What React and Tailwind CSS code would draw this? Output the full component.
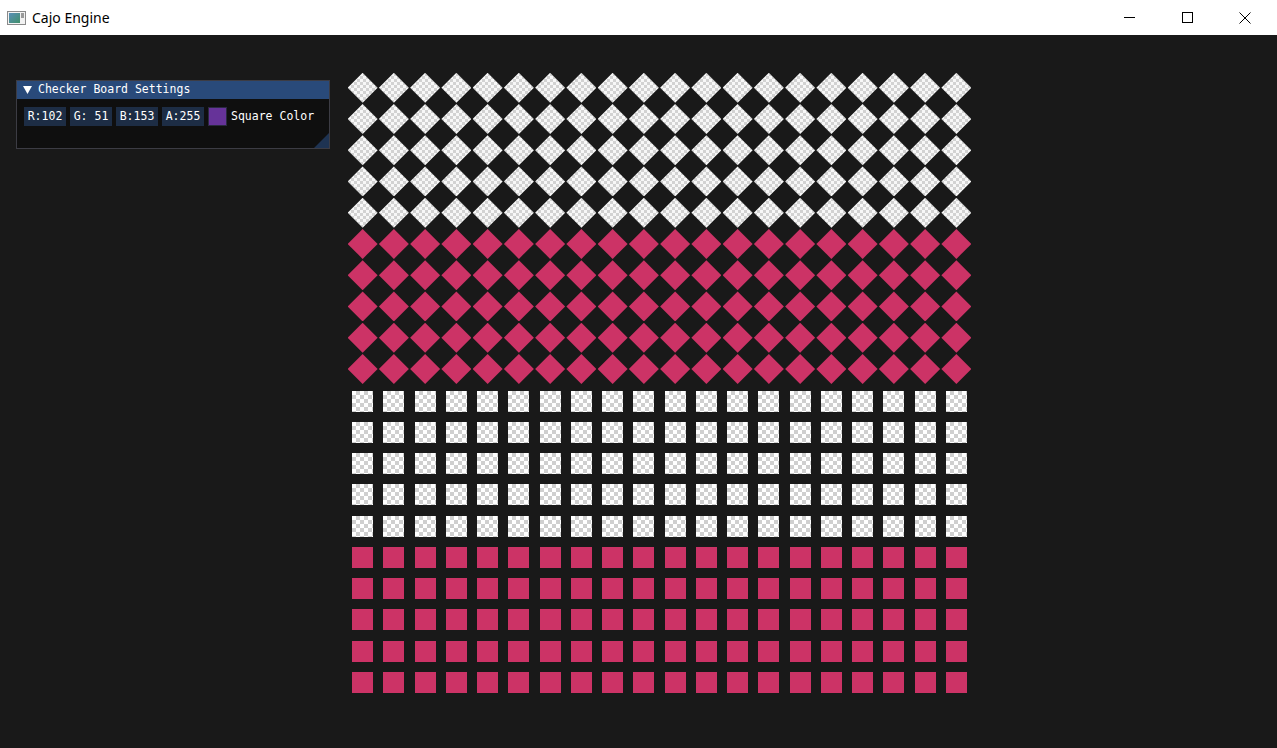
import React from "react";

const ROWS = 20;
const COLS = 20;

// checker texture used on the white shapes
const checker =
  "bg-[image:repeating-conic-gradient(#cfcfcf_0_25%,#ffffff_0_50%)] bg-[length:8px_8px]";
const checkerFine =
  "bg-[image:repeating-conic-gradient(#d2d2d2_0_25%,#f7f7f7_0_50%)] bg-[length:6px_6px]";

function Cell({ row }) {
  const diamond = row < 10;
  const white = row % 10 < 5;

  if (diamond) {
    return (
      <div className="flex items-center justify-center h-[31.25px]">
        <div
          className={`w-[30px] h-[30px] [clip-path:polygon(50%_0,100%_50%,50%_100%,0_50%)] ${
            white ? checkerFine : "bg-[#cc3366]"
          }`}
        />
      </div>
    );
  }
  return (
    <div className="flex items-center justify-center h-[31.25px] pt-[2px]">
      <div className={`w-[21px] h-[21px] ${white ? checker : "bg-[#cc3366]"}`} />
    </div>
  );
}

function TitleBar() {
  return (
    <div className="h-[35px] bg-white flex items-center shrink-0">
      {/* app icon */}
      <svg width="19" height="14" viewBox="0 0 19 14" className="ml-[7px]">
        <defs>
          <linearGradient id="ic" x1="0" y1="0" x2="1" y2="1">
            <stop offset="0" stopColor="#5a8fb8" />
            <stop offset="1" stopColor="#3f8f6a" />
          </linearGradient>
        </defs>
        <rect x="0.5" y="0.5" width="18" height="13" fill="#f2f2f2" stroke="#8a8a8a" />
        <rect x="2" y="2" width="11" height="10" fill="url(#ic)" />
        <rect x="14" y="2" width="3" height="5" fill="#9a9a9a" />
      </svg>
      <span className="ml-[6px] text-[14px] text-black font-['Noto_Sans',sans-serif] leading-none">
        Cajo Engine
      </span>
      <div className="ml-auto flex h-full">
        <div className="w-[58px] flex items-center justify-center">
          <svg width="11" height="11" viewBox="0 0 11 11">
            <line x1="0" y1="5.5" x2="11" y2="5.5" stroke="#000" strokeWidth="1" />
          </svg>
        </div>
        <div className="w-[58px] flex items-center justify-center">
          <svg width="11" height="11" viewBox="0 0 11 11">
            <rect x="0.5" y="0.5" width="10" height="10" fill="none" stroke="#000" strokeWidth="1" />
          </svg>
        </div>
        <div className="w-[58px] mr-[3px] flex items-center justify-center">
          <svg width="12" height="12" viewBox="0 0 12 12">
            <path d="M0.5 0.5 L11.5 11.5 M11.5 0.5 L0.5 11.5" stroke="#000" strokeWidth="1" />
          </svg>
        </div>
      </div>
    </div>
  );
}

function Settings() {
  const frames = ["R:102", "G: 51", "B:153", "A:255"];
  return (
    <div className="ml-[16px] mt-[45px] w-[314px] h-[69px] border border-[#3c3c44] bg-[#0f0f0f] flex flex-col font-['DejaVu_Sans_Mono',monospace] text-[11.5px] text-white leading-none relative">
      <div className="h-[18px] bg-[#294a7a] flex items-center shrink-0">
        <svg width="9" height="8" viewBox="0 0 9 8" className="ml-[6px]">
          <path d="M0 0 H9 L4.5 8 Z" fill="#fff" />
        </svg>
        <span className="ml-[6px]">Checker Board Settings</span>
      </div>
      <div className="flex items-center gap-[4px] pl-[7px] pt-[8px]">
        {frames.map((f) => (
          <div key={f} className="h-[19px] w-[42px] bg-[#1d2d45] flex items-center justify-center whitespace-pre">
            {f}
          </div>
        ))}
        <div className="h-[19px] w-[19px] bg-[#663399] border border-[#2a2a40]" />
        <span className="whitespace-pre">Square Color</span>
      </div>
      <svg width="15" height="15" viewBox="0 0 15 15" className="absolute right-0 bottom-0">
        <path d="M15 0 L15 15 L0 15 Z" fill="#1e3352" />
      </svg>
    </div>
  );
}

export default function App() {
  const cells = [];
  for (let r = 0; r < ROWS; r++) {
    for (let c = 0; c < COLS; c++) {
      cells.push(<Cell key={`${r}-${c}`} row={r} />);
    }
  }

  return (
    <div className="w-[1277px] h-[748px] bg-[#191919] flex flex-col overflow-hidden">
      <TitleBar />
      <div className="flex-1 flex items-start">
        <Settings />
        <div className="ml-[17px] mt-[37px] w-[625px] grid grid-cols-20">{cells}</div>
      </div>
    </div>
  );
}
